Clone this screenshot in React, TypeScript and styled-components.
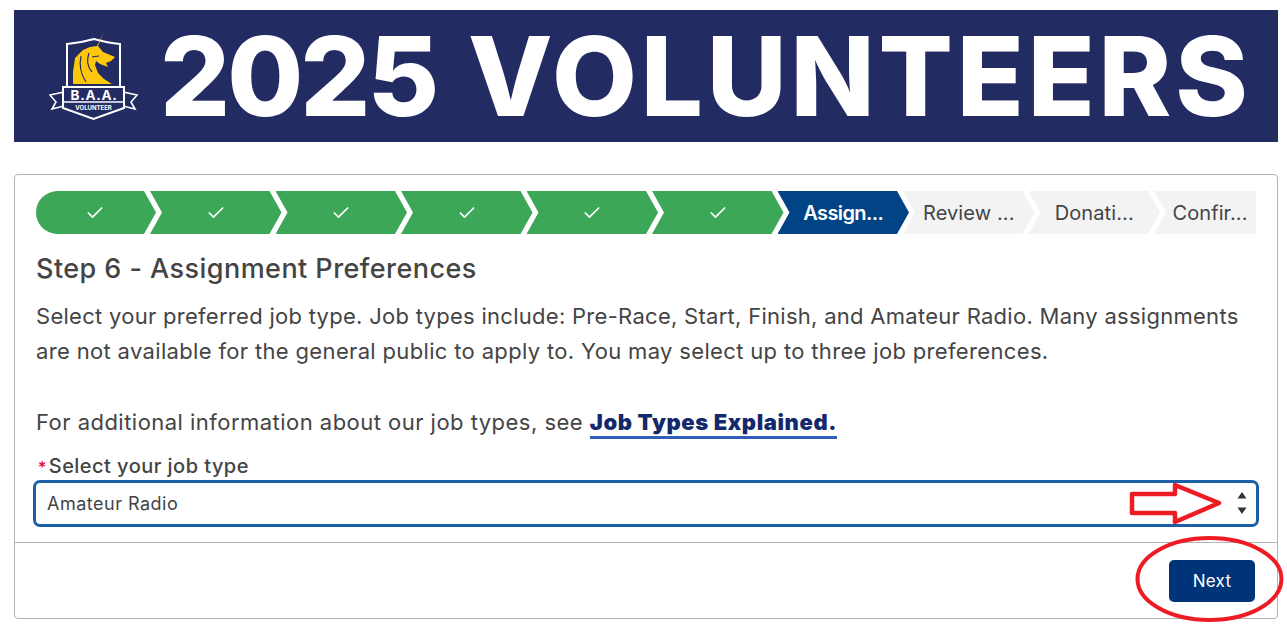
import React from "react";
import styled, { createGlobalStyle } from "styled-components";
import { Check } from "lucide-react";

const GlobalStyle = createGlobalStyle`
  html, body { margin: 0; padding: 0; background: #fff; }
  body { font-family: "Inter", "Open Sans", sans-serif; color: #444; }
`;

const Page = styled.div`
  position: relative;
  width: 1287px;
  height: 631px;
  padding: 10px 9px 0 14px;
  box-sizing: border-box;
  overflow: hidden;
`;

const Banner = styled.header`
  display: flex;
  align-items: center;
  height: 132px;
  padding-left: 35px;
  background: #232b63;
`;

const BannerTitle = styled.h1`
  display: flex;
  gap: 32px;
  margin: 0 0 0 21px;
  font-size: 110px;
  font-weight: 800;
  line-height: 1;
  color: #fff;
  white-space: nowrap;
`;

const BannerYear = styled.span`
  letter-spacing: -3px;
`;

const BannerWord = styled.span`
  letter-spacing: 3.8px;
`;

const Card = styled.section`
  display: flex;
  flex-direction: column;
  height: 445px;
  margin-top: 32px;
  box-sizing: border-box;
  border: 1px solid #b4b4b4;
  border-radius: 4px;
`;

const CardBody = styled.div`
  flex: 1;
  padding: 16px 21px 0;
`;

const Path = styled.ol`
  display: flex;
  height: 43px;
  margin: 0;
  padding: 0;
  list-style: none;
`;

const stepBg = { done: "#3ba757", current: "#014486", todo: "#f3f3f3" };
const stepFg = { done: "#fff", current: "#fff", todo: "#444" };

const Step = styled.li<{ $state: "done" | "current" | "todo"; $pos: "first" | "mid" | "last" }>`
  display: flex;
  align-items: center;
  justify-content: center;
  flex: none;
  box-sizing: border-box;
  width: ${(p) => (p.$pos === "first" ? 120 : p.$pos === "last" ? 102 : 131.5)}px;
  margin-left: ${(p) => (p.$pos === "first" ? 0 : -6)}px;
  padding-left: ${(p) => (p.$pos === "first" ? 8 : 10)}px;
  padding-right: ${(p) => (p.$pos === "last" ? 0 : 10)}px;
  background: ${(p) => stepBg[p.$state]};
  color: ${(p) => stepFg[p.$state]};
  font-size: 20px;
  font-weight: ${(p) => (p.$state === "current" ? 600 : 400)};
  letter-spacing: ${(p) => (p.$state === "current" ? -0.6 : 0.1)}px;
  white-space: nowrap;
  border-radius: ${(p) => (p.$pos === "first" ? "22px 0 0 22px" : "0")};
  clip-path: ${(p) =>
    p.$pos === "first"
      ? "polygon(0 0, calc(100% - 12px) 0, 100% 50%, calc(100% - 12px) 100%, 0 100%)"
      : p.$pos === "last"
      ? "polygon(0 0, 100% 0, 100% 100%, 0 100%, 12px 50%)"
      : "polygon(0 0, calc(100% - 12px) 0, 100% 50%, calc(100% - 12px) 100%, 0 100%, 12px 50%)"};
`;

const Heading = styled.h2`
  margin: 17px 0 0;
  font-size: 27px;
  font-weight: 500;
  line-height: 36px;
  letter-spacing: 0.45px;
  color: #444;
`;

const Copy = styled.div`
  margin: 12px 0 0;
  font-size: 22px;
  line-height: 35.2px;
  color: #444;
`;

const CopyLine = styled.p<{ $tracking: number; $gap?: boolean }>`
  margin: ${(p) => (p.$gap ? "35.2px" : "0")} 0 0;
  letter-spacing: ${(p) => p.$tracking}px;
`;

const DocLink = styled.a`
  font-weight: 900;
  color: #14296b;
  letter-spacing: 0.6px;
  text-decoration: none;
  border-bottom: 3px solid #2f5fb8;
  padding-bottom: 1px;
`;

const Field = styled.div`
  margin: 12px -3px 0;
`;

const FieldLabel = styled.label`
  display: block;
  padding-left: 5px;
  font-size: 20px;
  font-weight: 500;
  line-height: 28px;
  letter-spacing: 0.45px;
  color: #444;
`;

const Req = styled.span`
  margin-right: 2px;
  font-size: 16px;
  color: #ea001e;
`;

const SelectBox = styled.div`
  display: flex;
  align-items: center;
  justify-content: space-between;
  height: 47px;
  margin-top: -1px;
  padding: 0 9px 0 11px;
  box-sizing: border-box;
  border: 3px solid #1b5fa6;
  border-radius: 7px;
  font-size: 18px;
  letter-spacing: 0.5px;
  color: #444;
`;

const CardFooter = styled.footer`
  display: flex;
  align-items: center;
  justify-content: flex-end;
  height: 76px;
  padding-right: 22px;
  box-sizing: border-box;
  border-top: 1px solid #b4b4b4;
`;

const NextButton = styled.button`
  width: 86px;
  height: 42px;
  padding: 0;
  border: 0;
  border-radius: 5px;
  background: #003478;
  color: #fff;
  font-family: inherit;
  font-size: 17px;
  font-weight: 400;
  letter-spacing: 0.3px;
`;

const Markup = styled.svg`
  position: absolute;
  left: 0;
  top: 0;
  pointer-events: none;
`;

const Logo = () => (
  <svg width="90" height="90" viewBox="49 31 90 90" style={{ flex: "none" }}>
    <path d="M67 88 V44 Q80 43 94 39 Q108 43 120 44 V88" fill="none" stroke="#fff" strokeWidth="2" />
    <path
      d="M104 32 L98 46 L103 52 L115 57 L111 61 L106 63 L108 67 L100 64 L96 61 L95 65 L98 73 L104 79 L112 84 H73 L73 72 L75 58 L83 50 L90 47 L97 46 Z"
      fill="#fdc70c"
    />
    <path d="M81 56 Q78 70 86 82 M89 53 Q85 64 92 72 M92 57 L99 56" fill="none" stroke="#232b63" strokeWidth="1.2" />
    <path d="M50 95 L64 92 V106 L52 109 L56 102 Z M137 95 L123 92 V106 L135 109 L131 102 Z" fill="none" stroke="#fff" strokeWidth="1.6" />
    <path d="M63 87 H124 V108 L93.5 119 L63 108 Z" fill="#232b63" stroke="#fff" strokeWidth="2" />
    <path d="M63 102 H124" stroke="#fff" strokeWidth="1.4" />
    <text x="94" y="99.5" textAnchor="middle" fill="#fff" fontSize="13.5" fontWeight="700" letterSpacing="0.7">B.A.A.</text>
    <text x="93.5" y="110" textAnchor="middle" fill="#fff" fontSize="6" fontWeight="700">VOLUNTEER</text>
  </svg>
);

const steps: { label?: string; state: "done" | "current" | "todo" }[] = [
  { state: "done" },
  { state: "done" },
  { state: "done" },
  { state: "done" },
  { state: "done" },
  { state: "done" },
  { label: "Assign...", state: "current" },
  { label: "Review ...", state: "todo" },
  { label: "Donati...", state: "todo" },
  { label: "Confir...", state: "todo" },
];

export default function App() {
  return (
    <Page>
      <GlobalStyle />
      <Banner>
        <Logo />
        <BannerTitle>
          <BannerYear>2025</BannerYear>
          <BannerWord>VOLUNTEERS</BannerWord>
        </BannerTitle>
      </Banner>
      <Card>
        <CardBody>
          <Path>
            {steps.map((s, i) => (
              <Step key={i} $state={s.state} $pos={i === 0 ? "first" : i === steps.length - 1 ? "last" : "mid"}>
                {s.label ?? <Check size={20} strokeWidth={2} />}
              </Step>
            ))}
          </Path>
          <Heading>Step 6 - Assignment Preferences</Heading>
          <Copy>
            <CopyLine $tracking={0.28}>
              Select your preferred job type. Job types include: Pre-Race, Start, Finish, and Amateur Radio. Many assignments
            </CopyLine>
            <CopyLine $tracking={0.34}>
              are not available for the general public to apply to. You may select up to three job preferences.
            </CopyLine>
            <CopyLine $tracking={0.47} $gap>
              For additional information about our job types, see <DocLink href="#">Job Types Explained.</DocLink>
            </CopyLine>
          </Copy>
          <Field>
            <FieldLabel>
              <Req>*</Req>Select your job type
            </FieldLabel>
            <SelectBox>
              Amateur Radio
              <svg width="10" height="24" viewBox="0 0 10 24">
                <path d="M5 1 L9.5 7.5 H0.5 Z M0.5 16.5 H9.5 L5 23 Z" fill="#333" />
              </svg>
            </SelectBox>
          </Field>
        </CardBody>
        <CardFooter>
          <NextButton>Next</NextButton>
        </CardFooter>
      </Card>
      <Markup width="1287" height="631" viewBox="0 0 1287 631">
        <path
          d="M1132 494 H1175 V485 L1219 503 L1175 522 V513 H1132 Z"
          fill="none"
          stroke="#ed1c24"
          strokeWidth="4.5"
          strokeLinejoin="round"
        />
        <ellipse cx="1209.5" cy="579" rx="72" ry="41" fill="none" stroke="#ed1c24" strokeWidth="4" />
      </Markup>
    </Page>
  );
}
